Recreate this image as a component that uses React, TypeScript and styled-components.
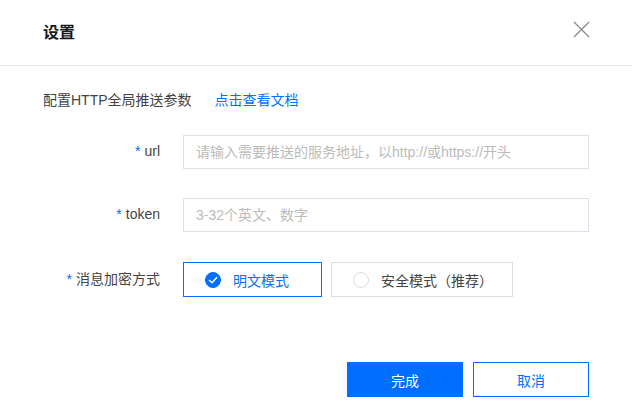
import React from "react";
import styled, { createGlobalStyle } from "styled-components";

const GlobalStyle = createGlobalStyle`
  html, body {
    margin: 0;
    padding: 0;
    background: #fff;
  }
  body {
    font-family: "Liberation Sans", "Noto Sans CJK SC", sans-serif;
    font-size: 14px;
    color: #444;
  }
`;

const Dialog = styled.div`
  width: 632px;
  height: 410px;
  box-sizing: border-box;
  display: flex;
  flex-direction: column;
  background: #fff;
`;

const Header = styled.div`
  height: 66px;
  box-sizing: border-box;
  padding: 0 43px;
  display: flex;
  align-items: center;
  justify-content: space-between;
  border-bottom: 1px solid #dfe3ea;
`;

const Title = styled.h2`
  margin: 0;
  margin-top: -4px;
  font-size: 16px;
  font-weight: bold;
  color: #15181d;
`;

const CloseButton = styled.button`
  width: 18px;
  height: 18px;
  margin-top: -6px;
  margin-right: -1px;
  padding: 0;
  border: none;
  background: none;
  cursor: pointer;
  display: flex;
  align-items: center;
  justify-content: center;
`;

const Body = styled.div`
  padding: 24px 43px 0;
  display: flex;
  flex-direction: column;
`;

const Intro = styled.div`
  height: 20px;
  line-height: 20px;
  display: flex;
  gap: 23px;
  margin-bottom: 25px;
  color: #444;
`;

const DocLink = styled.a`
  color: #006eff;
  text-decoration: none;
  cursor: pointer;
`;

const Form = styled.div`
  display: grid;
  grid-template-columns: 117px 1fr;
  column-gap: 23px;
  row-gap: 29px;
  align-items: center;
`;

const Label = styled.label`
  text-align: right;
  color: #444;
  margin-top: -3px;
  white-space: nowrap;
`;

const Star = styled.span`
  color: #006eff;
  margin-right: 4px;
`;

const Input = styled.input`
  height: 34px;
  width: 406px;
  box-sizing: border-box;
  border: 1px solid #dcdfe6;
  padding: 0 12px;
  font-family: inherit;
  font-size: 14px;
  color: #444;
  outline: none;
  &::placeholder {
    color: #bbb;
  }
`;

const Options = styled.div`
  display: flex;
  gap: 9px;
  margin-top: 1px;
`;

const Option = styled.div<{ $active?: boolean; $width: number }>`
  width: ${(p) => p.$width}px;
  height: 35px;
  box-sizing: border-box;
  border: 1px solid ${(p) => (p.$active ? "#006eff" : "#dddddd")};
  display: flex;
  align-items: center;
  padding-left: 21px;
  gap: 12px;
  color: ${(p) => (p.$active ? "#006eff" : "#444")};
  cursor: pointer;
`;

const Dot = styled.span<{ $active?: boolean }>`
  width: 16px;
  height: 16px;
  box-sizing: border-box;
  border-radius: 50%;
  border: 1px solid ${(p) => (p.$active ? "#006eff" : "#ddd")};
  background: ${(p) => (p.$active ? "#006eff" : "#fff")};
  display: flex;
  align-items: center;
  justify-content: center;
`;

const Footer = styled.div`
  margin-top: auto;
  padding: 0 43px 13px;
  display: flex;
  justify-content: flex-end;
  gap: 10px;
`;

const Button = styled.button<{ $primary?: boolean }>`
  width: 116px;
  height: 35px;
  box-sizing: border-box;
  border: 1px solid #006eff;
  background: ${(p) => (p.$primary ? "#006eff" : "#fff")};
  color: ${(p) => (p.$primary ? "#fff" : "#006eff")};
  font-family: inherit;
  font-size: 14px;
  cursor: pointer;
`;

export default function App() {
  const [mode, setMode] = React.useState<"plain" | "safe">("plain");
  return (
    <>
      <GlobalStyle />
      <Dialog>
        <Header>
          <Title>设置</Title>
          <CloseButton aria-label="close">
            <svg width="17" height="17" viewBox="0 0 17 17">
              <path d="M1 1L16 16M16 1L1 16" stroke="#8a8a8a" strokeWidth="1.3" fill="none" />
            </svg>
          </CloseButton>
        </Header>
        <Body>
          <Intro>
            <span>配置HTTP全局推送参数</span>
            <DocLink>点击查看文档</DocLink>
          </Intro>
          <Form>
            <Label>
              <Star>*</Star>url
            </Label>
            <Input placeholder="请输入需要推送的服务地址，以http://或https://开头" />
            <Label>
              <Star>*</Star>token
            </Label>
            <Input placeholder="3-32个英文、数字" />
            <Label>
              <Star>*</Star>消息加密方式
            </Label>
            <Options>
              <Option $width={139} $active={mode === "plain"} onClick={() => setMode("plain")}>
                <Dot $active={mode === "plain"}>
                  {mode === "plain" && (
                    <svg width="10" height="8" viewBox="0 0 10 8">
                      <path d="M1 4L4 6.8L9 1.2" stroke="#fff" strokeWidth="1.5" fill="none" />
                    </svg>
                  )}
                </Dot>
                明文模式
              </Option>
              <Option $width={182} $active={mode === "safe"} onClick={() => setMode("safe")}>
                <Dot $active={mode === "safe"}>
                  {mode === "safe" && (
                    <svg width="10" height="8" viewBox="0 0 10 8">
                      <path d="M1 4L4 6.8L9 1.2" stroke="#fff" strokeWidth="1.5" fill="none" />
                    </svg>
                  )}
                </Dot>
                安全模式（推荐）
              </Option>
            </Options>
          </Form>
        </Body>
        <Footer>
          <Button $primary>完成</Button>
          <Button>取消</Button>
        </Footer>
      </Dialog>
    </>
  );
}
